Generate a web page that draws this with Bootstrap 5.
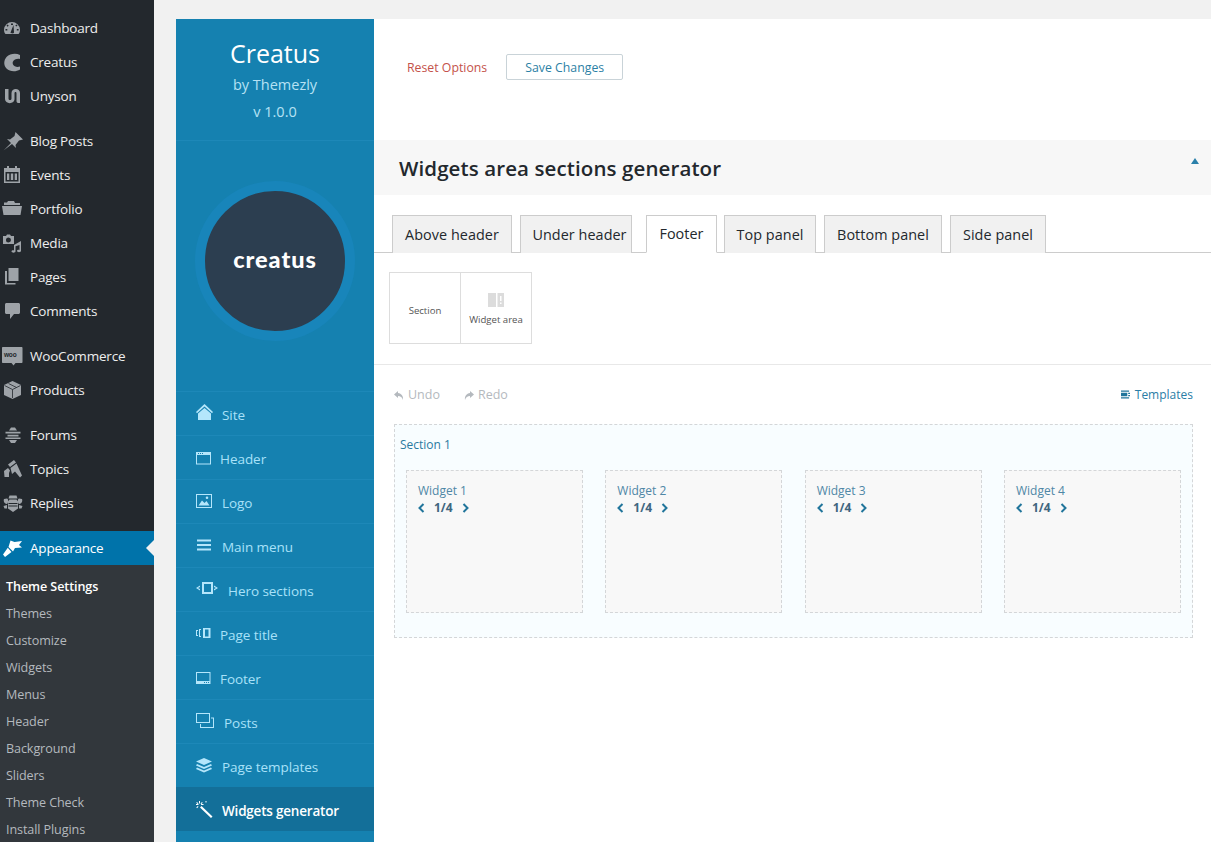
<!doctype html>
<html lang="en"><head><meta charset="utf-8"><title>Theme Settings</title>
<link href="https://cdn.jsdelivr.net/npm/bootstrap@5.3.0/dist/css/bootstrap.min.css" rel="stylesheet">
<style>
html,body{height:842px;overflow:hidden}
body{background:#f1f1f1;font-family:"Open Sans","Noto Sans",sans-serif;color:#23282d}
.wp-side{width:154px;height:842px;background:#23282d;flex:none;padding-top:11px;overflow:hidden}
.wp-item{height:34px;color:#eee;font-size:13.5px;padding:0 0 0 30px;position:relative;display:flex;align-items:center;text-decoration:none;letter-spacing:-.2px}
.wp-item svg{position:absolute;left:3px;top:7px;width:20px;height:20px;fill:#9ea3a8;overflow:visible}
.wp-gap{height:11px}
.wp-active{background:#0073aa;color:#fff}
.wp-active svg{fill:#fff}
.wp-active::after{content:"";position:absolute;right:0;top:9px;border:8px solid transparent;border-right-color:#f1f1f1;border-left:0}
.wp-sub{background:#32373c;padding-top:8.5px;height:300px}
.wp-sub a{display:flex;align-items:center;height:27px;padding-left:6px;font-size:12.6px;color:#b4b9be;text-decoration:none;letter-spacing:-.1px}
.wp-sub a.on{color:#fff;font-weight:600}
.main-wrap{padding:19px 0 0 22px;flex:1;min-width:0}
.fw-box{height:823px;background:#fff}
.blue-panel{width:198px;background:#1581b0;flex:none;height:823px;color:#aee1f6}
.blue-head{height:122px;text-align:center;border-bottom:1px solid #1d88b8;padding-top:16px}
.blue-head h1{font-size:25px;color:#fff;font-weight:400;margin:0;line-height:36px}
.blue-head div{font-size:14.5px;line-height:27px;color:#b6e1f4}
.logo-zone{height:250px;display:flex;align-items:center;justify-content:center;padding-bottom:10px}
.ring{width:160px;height:160px;border-radius:50%;border:10px solid #1885ba;background:#2c3e50;color:#fff;font-family:"Lato","Open Sans",sans-serif;font-weight:900;font-size:23.5px;display:flex;align-items:center;justify-content:center;letter-spacing:.95px;padding-bottom:2px}
.bnav{display:block;height:44px;border-top:1px solid #1d88b8;position:relative;color:#a9e1f9;font-size:13.5px;text-decoration:none;line-height:46px;letter-spacing:-.05px}
.bnav svg{position:absolute;left:20px;top:12px;fill:#b4e6fb}
.bnav svg.dy1{top:13px}.bnav svg.dy2{top:14px}.bnav svg.dy3{top:15px}
.bnav.on{background:#136f99;color:#fff;font-weight:600;border-top-color:#136f99;letter-spacing:-.2px}
.bnav.on svg{fill:#fff}
.t44{padding-left:44px}.t46{padding-left:46px}.t48{padding-left:48px}.t52{padding-left:52px}
.content-pane{flex:1;min-width:0;position:relative}
.top-actions{height:121px;padding:35px 0 0 33px;display:flex;align-items:flex-start;gap:19px}
.reset-link{font-size:12.3px;color:#c4524a;line-height:27px;text-decoration:none}
.save-btn{width:117px;height:26px;border:1px solid #c9d3d8;border-radius:2px;color:#2c7fa5;font-size:12.3px;background:#fff;padding:1px 0 0;line-height:24px}
.section-bar{height:55px;background:#f7f7f7;display:flex;align-items:center;padding-left:25px;position:relative}
.section-bar h2{font-size:20.5px;font-weight:600;color:#23282d;margin:0;letter-spacing:.1px;line-height:56px;height:55px}
.tri{position:absolute;right:12px;top:18px;border:4px solid transparent;border-bottom:6px solid #2b80aa;border-top:0}
.tab-row{margin-top:20px;height:38px;border-bottom:1px solid #ccc;display:flex;padding-left:18px}
.tab-i{height:38px;background:#f1f1f1;border:1px solid #ccc;border-bottom:0;font-size:14.4px;font-weight:500;letter-spacing:.05px;color:#23282d;display:flex;align-items:center;justify-content:center;text-decoration:none}
.tab-i.on{background:#fff;border-bottom:1px solid #fff}
.w120{width:120px}.w112{width:112px;margin-left:8px;padding-left:7px}.w71{width:71px;margin-left:14px}.w92{width:92px;margin-left:7px}.w118{width:118px;margin-left:8px}.w96{width:96px;margin-left:8px}
.thumbs{padding:19px 0 20px 15px;border-bottom:1px solid #e8e8e8;display:flex;height:112px}
.thumb-i{width:72px;height:72px;border:1px solid #ddd;margin-right:-1px;font-size:9.6px;color:#555;display:flex;flex-direction:column;align-items:center;justify-content:center;background:#fff;padding-top:7px}
.thumb-i svg{margin-bottom:6px;margin-top:-2px}
.tools{height:59px;padding:0 18px 0 20px;display:flex;align-items:center;font-size:12px}
.tools-l{display:flex;gap:24px;color:#b4b9be;padding-top:1px}
.tools-l span{display:flex;align-items:center;gap:4px;font-size:12.5px}
.tools-r{margin-left:auto;color:#2b7da6;display:flex;align-items:center;gap:5px}
.section-box{margin:0 18px 0 20px;height:214px;border:1px dashed #d4d6d8;background:#f8fdff;padding:11px 11px 0 5px}
.section-name{font-size:12px;color:#2b7a9f;line-height:17px}
.widget-row{display:flex;justify-content:space-between;margin-top:17px;padding:0 0 0 6px}
.widget-i{width:177px;height:143px;background:#f8f8f8;border:1px dashed #d4d6d8;padding:11px 11px;font-size:12px;color:#4f87a6;line-height:18px}
.w-size{display:flex;align-items:center;font-size:12px;line-height:16px;gap:9px}
.w-size svg{fill:none;stroke:#21759b;stroke-width:2}
.w-size b{font-weight:700;color:#40667f}
</style></head>
<body class="d-flex">
<nav class="wp-side">
<a class="wp-item" href="#"><svg viewBox="0 0 20 20"><path d="M9 4a8 8 0 0 0-8 7.500c0 2 .5 3.500 1.500 4.500h13c1-1 1.500-2.500 1.500-4.500A8 8 0 0 0 9 4z"/><path fill="#23282d" d="M8 5.500h2V7H8zM3.500 7.500l1.200-1 1 1.200-1.200 1zM13.500 6.500l1 1-1.200 1-1-1zM2.500 11h1.800v1.500H2.500zM13.800 11h1.800v1.500h-1.800zM7.500 14.500l3-7.500 .5 7.500c-.3 1.200-3.300 1.200-3.500 0z"/></svg>Dashboard</a>
<a class="wp-item" href="#"><svg viewBox="0 0 20 20"><path d="M17 3C13 1 7 1.500 3.500 5 .5 8.500.5 13.500 3.500 16.500 7 20 13 20 17 17.500V14.500C14 15.500 11 14.500 10 12.500 9 10.500 10 8.500 12 7.500 13.500 6.800 15.500 6.500 17 7z"/></svg>Creatus</a>
<a class="wp-item" href="#"><svg viewBox="0 0 20 20"><path d="M2 3h3.500v9.500c0 2 3 2 3 0V7c0-5.500 8.500-5.500 8.500 0v10h-1.500c-1 0-2-.5-2-2V7c0-1.500-2-1.500-2 0v6c0 5.500-9.500 5.500-9.500 0z"/></svg>Unyson</a>
<div class="wp-gap"></div>
<a class="wp-item" href="#"><svg viewBox="0 0 20 20"><path d="M12.500 1l-1 4-4.500 3.500-3-.5L8 12l-7.500 7.500L9 13l4 4-.5-3 3.500-4.500 4-1z"/></svg>Blog Posts</a>
<a class="wp-item" href="#"><svg viewBox="0 0 20 20"><path fill-rule="evenodd" d="M1 3h3V1h2v2h6V1h2v2h3v15H1zm1.500 4v9.500h13V7zM4 8.500h2.300V15H4zm3.800 0h2.400V15H7.800zm3.900 0H14V15h-2.300z"/></svg>Events</a>
<a class="wp-item" href="#"><svg viewBox="0 0 20 20"><path d="M-1 7h20l-1.500 9H.5zM1 6V3.500h3L5 2h6l1 2h5v2z"/></svg>Portfolio</a>
<a class="wp-item" href="#"><svg viewBox="0 0 20 20"><path fill-rule="evenodd" d="M0 3h3l1-1.500h3L8 3h3v8H0zm5.500 1.500a2.500 2.500 0 1 0 0 5 2.500 2.500 0 0 0 0-5z"/><path d="M18 8v10c0 1.500-4 1.500-4 0s2-1.500 2.500-1v-5l-4 1.200V18.500c0 1.500-4 1.500-4 0s2-1.500 2.500-1v-5.500z"/></svg>Media</a>
<a class="wp-item" href="#"><svg viewBox="0 0 20 20"><path d="M5.500 1h10v13h-10zM2 4h2v12h8.500v1.500H2z"/></svg>Pages</a>
<a class="wp-item" href="#"><svg viewBox="0 0 20 20"><path d="M3.500 2h12c.8 0 1.500.7 1.500 1.500v8c0 .8-.7 1.500-1.500 1.500H11l-4 5v-5H3.500C2.700 13 2 12.300 2 11.500v-8C2 2.700 2.700 2 3.500 2z"/></svg>Comments</a>
<div class="wp-gap"></div>
<a class="wp-item" href="#"><svg viewBox="0 0 20 20"><path d="M0 1h18.500c.6 0 1 .4 1 1v14c0 .6-.4 1-1 1h-6l-2 2.500-2-2.500H0c-.6 0-1-.4-1-1V2c0-.6.4-1 1-1z"/><text x="1" y="11" font-size="6.500" font-weight="700" fill="#23282d" font-family="Liberation Sans">woo</text></svg>WooCommerce</a>
<a class="wp-item" href="#"><svg viewBox="0 0 20 20"><path d="M9.500 1l8.500 4v10l-8.500 4L1 15V5z"/><path fill="none" stroke="#23282d" stroke-width=".8" d="M1.500 5.500l8 4 8-4M9.500 9.500V18M5.500 3.500l8 4"/></svg>Products</a>
<div class="wp-gap"></div>
<a class="wp-item" href="#"><svg viewBox="0 0 20 20"><path d="M8 2.500h4l2 3H6zM2.500 6.800h15v1.700h-15zM4.500 9.800h11v1.700h-11zM2.500 12.500h15V14h-15zM6 15h8l-2 3h-4z"/></svg>Forums</a>
<a class="wp-item" href="#"><svg viewBox="0 0 20 20"><path d="M5 5.500L11 1l2 2.500-6 4.500zM7.500 9l6-4.500L19 16.500l-2 2-5-6-3 2.500zM1 12l4-3 2 2.500-1 2.500v4H1.500z"/></svg>Topics</a>
<a class="wp-item" href="#"><svg viewBox="0 0 20 20"><path d="M6.500 2.500h7l1 3h-9zM6.500 6.500h7l1.500 2v7L10 19l-5-3.500v-7zM4 5.500c1.500.5 1.500 4 0 5.500-2 0-4-2-3-5zM16 5.500c-1.500.5-1.500 4 0 5.500 2 0 4-2 3-5zM.5 13l3.500-1v3.500H1.500zM19.500 13L16 12v3.500h2.500z"/><path fill="none" stroke="#23282d" stroke-width="1" d="M5.500 10.500h9M5.500 13h9"/></svg>Replies</a>
<div class="wp-gap"></div>
<a class="wp-item wp-active" href="#"><svg viewBox="0 0 20 20"><path d="M19 3l-7.500 1L7.500 2.500 5.500 9l4.500 4.500 2-3.500 7-.5-3-2.500zM4.800 9.800L0 16.500 2 19l6.500-5z"/></svg>Appearance</a>
<div class="wp-sub">
<a class="on" href="#">Theme Settings</a><a href="#">Themes</a><a href="#">Customize</a><a href="#">Widgets</a><a href="#">Menus</a><a href="#">Header</a><a href="#">Background</a><a href="#">Sliders</a><a href="#">Theme Check</a><a href="#">Install Plugins</a>
</div>
</nav>
<div class="main-wrap">
<div class="fw-box d-flex">
<aside class="blue-panel">
<div class="blue-head"><h1>Creatus</h1><div>by Themezly</div><div>v 1.0.0</div></div>
<div class="logo-zone"><div class="ring">creatus</div></div>
<a class="bnav t46" href="#"><svg width="17" height="17" viewBox="0 0 17 17"><path d="M8.500 0L17 8l-1 1.200-7.500-6.700L1 9.200 0 8zM8.500 4L15 9.500V16H2V9.500z"/></svg>Site</a>
<a class="bnav t44" href="#"><svg class="dy3" width="15" height="14" viewBox="0 0 15 14"><path d="M0 1h15v12.500H0zM1 4v8.500h13V4zm1-2v1h1V2zm2 0v1h1V2zm2 0v1h1V2z" fill-rule="evenodd"/></svg>Header</a>
<a class="bnav t46" href="#"><svg class="dy2" width="17" height="14" viewBox="0 0 17 14"><path d="M0 0h16v14H0zM1 1v12h14V1zm1.500 10.500l3.500-5 2.500 2.500 2-2 3 4.500zM11 2.500a1.300 1.300 0 1 1 0 2.600 1.300 1.300 0 0 1 0-2.600z" fill-rule="evenodd"/></svg>Logo</a>
<a class="bnav t46" href="#"><svg class="dy2" width="15" height="14" viewBox="0 0 15 14"><path d="M1 1.500h14v2H1zM1 6h14v2H1zM1 10.500h14v2H1z"/></svg>Main menu</a>
<a class="bnav t52" href="#"><svg class="dy2" width="22" height="14" viewBox="0 0 22 14"><path d="M6 0h11v12H6zm2 2v8h7V2zM4 3.500v1.500L2 6l2 1v1.500L0 6zM18 3.500L22 6l-4 2.500V7l2-1-2-1z" fill-rule="evenodd"/></svg>Hero sections</a>
<a class="bnav t44" href="#"><svg class="dy3" width="15" height="14" viewBox="0 0 15 14"><path d="M7 1h7.500v10H7zm2 1.500v7h3.500v-7zM0 3h2v1H1v4h1v1H0zM3 2h2v1H4v6h1v1H3z" fill-rule="evenodd"/></svg>Page title</a>
<a class="bnav t44" href="#"><svg class="dy3" width="15" height="14" viewBox="0 0 15 14"><path d="M0 1h14.500v12H0zM1 2v8h12.500V2zm7 9v1h1v-1zm2 0v1h1v-1zm2 0v1h1v-1z" fill-rule="evenodd"/></svg>Footer</a>
<a class="bnav t48" href="#"><svg width="19" height="17" viewBox="0 0 19 17"><path d="M0 1h14v10H0zm1 1v8h12V2zM4 12h1v3h12V6.500h-2v-1h3V16H4z" fill-rule="evenodd"/></svg>Posts</a>
<a class="bnav t46" href="#"><svg class="dy2" width="16" height="15" viewBox="0 0 16 15"><path d="M8 0l8 3.500L8 7 0 3.500zM1 6l7 3 7-3 1 1.500L8 11 0 7.500zM1 9.500l7 3 7-3 1 1.500-8 3.500L0 11z"/></svg>Page templates</a>
<a class="bnav on t46" href="#"><svg class="dy1" width="17" height="17" viewBox="0 0 17 17"><path d="M5.500 5l11 10.500-1.500 1.500L4 6.500zM3 0h1v2.500H3zM0 3h2.500v1H0zM5 3h2.500v1H5zM1 1l1.500 1.500-.7.700L.3 1.700zM6 1L4.500 2.500l.7.700 1.500-1.500zM1.800 5l.7.700L1 7.200.3 6.500zM9.500 0h1v1.500h-1z"/></svg>Widgets generator</a>
</aside>
<main class="content-pane">
<div class="top-actions"><a class="reset-link" href="#">Reset Options</a><button class="save-btn" type="button">Save Changes</button></div>
<div class="section-bar"><h2>Widgets area sections generator</h2><span class="tri"></span></div>
<div class="tab-row">
<a class="tab-i w120" href="#">Above header</a>
<a class="tab-i w112" href="#">Under header</a>
<a class="tab-i on w71" href="#">Footer</a>
<a class="tab-i w92" href="#">Top panel</a>
<a class="tab-i w118" href="#">Bottom panel</a>
<a class="tab-i w96" href="#">Side panel</a>
</div>
<div class="thumbs">
<div class="thumb-i">Section</div>
<div class="thumb-i"><svg width="16" height="14" viewBox="0 0 16 14"><path fill="#dcdcdc" d="M0 0h8v14H0zM9.500 0H16v14H9.500z"/><path fill="#fff" d="M12 3h1.500v5H12zM12 9.500h1.500V11H12z"/></svg>Widget area</div>
</div>
<div class="tools">
<div class="tools-l"><span><svg width="10" height="9" viewBox="0 0 10 9"><path fill="#b4b9be" d="M4 0L0 3.500 4 7V5c2.500 0 4 1 5 4 .5-4-1.500-6.500-5-7z"/></svg>Undo</span><span><svg width="10" height="9" viewBox="0 0 10 9"><path fill="#b4b9be" d="M6 0l4 3.500L6 7V5C3.500 5 2 6 1 9 .5 5 2.500 2.500 6 2z"/></svg>Redo</span></div>
<div class="tools-r"><svg width="9" height="9" viewBox="0 0 10 9"><path fill="#21759b" d="M0 0h9v1.500H0zM0 2.500h7v4H0zM8 2.500h2V4H8zM8 5h2v1.500H8zM0 7.500h9V9H0z"/></svg>Templates</div>
</div>
<section class="section-box">
<div class="section-name">Section 1</div>
<div class="widget-row">
<div class="widget-i">Widget 1<div class="w-size"><svg width="7" height="10" viewBox="0 0 7 10"><path d="M5.500 1L1.500 5l4 4"/></svg><b>1/4</b><svg width="7" height="10" viewBox="0 0 7 10"><path d="M1.500 1l4 4-4 4"/></svg></div></div>
<div class="widget-i">Widget 2<div class="w-size"><svg width="7" height="10" viewBox="0 0 7 10"><path d="M5.500 1L1.500 5l4 4"/></svg><b>1/4</b><svg width="7" height="10" viewBox="0 0 7 10"><path d="M1.500 1l4 4-4 4"/></svg></div></div>
<div class="widget-i">Widget 3<div class="w-size"><svg width="7" height="10" viewBox="0 0 7 10"><path d="M5.500 1L1.500 5l4 4"/></svg><b>1/4</b><svg width="7" height="10" viewBox="0 0 7 10"><path d="M1.500 1l4 4-4 4"/></svg></div></div>
<div class="widget-i">Widget 4<div class="w-size"><svg width="7" height="10" viewBox="0 0 7 10"><path d="M5.500 1L1.500 5l4 4"/></svg><b>1/4</b><svg width="7" height="10" viewBox="0 0 7 10"><path d="M1.500 1l4 4-4 4"/></svg></div></div>
</div>
</section>
</main>
</div>
</div>
</body></html>
